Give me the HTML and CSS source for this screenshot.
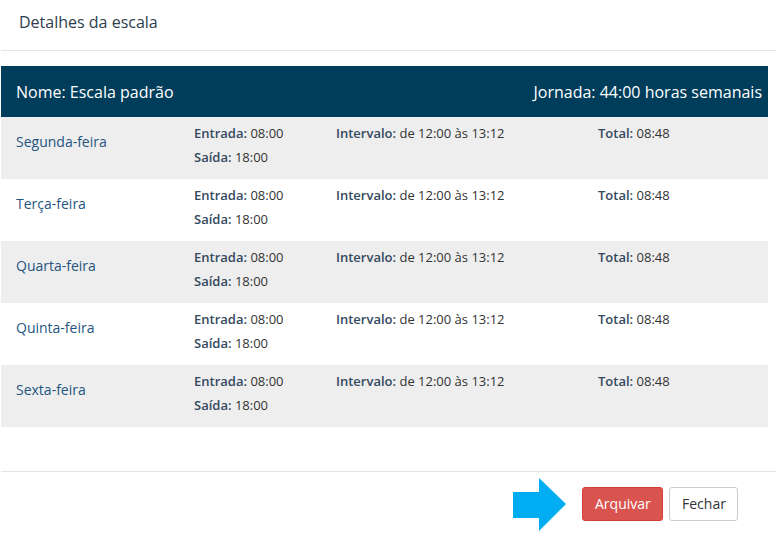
FILE: index.html
```html
<!DOCTYPE html>
<html lang="pt">
<head>
<meta charset="utf-8">
<title>Detalhes da escala</title>
<link rel="stylesheet" href="styles.css">
</head>
<body>
<div class="modal">
  <div class="modal-header">
    <h4 class="modal-title">Detalhes da escala</h4>
  </div>
  <div class="modal-body">
    <div class="scale-head">
      <span>Nome: Escala padrão</span>
      <span>Jornada: 44:00 horas semanais</span>
    </div>
    <div class="row odd">
      <div class="day">Segunda-feira</div>
      <div class="col"><div><b>Entrada:</b> 08:00</div><div><b>Saída:</b> 18:00</div></div>
      <div class="col"><b>Intervalo:</b> de 12:00 às 13:12</div>
      <div class="col"><b>Total:</b> 08:48</div>
    </div>
    <div class="row">
      <div class="day">Terça-feira</div>
      <div class="col"><div><b>Entrada:</b> 08:00</div><div><b>Saída:</b> 18:00</div></div>
      <div class="col"><b>Intervalo:</b> de 12:00 às 13:12</div>
      <div class="col"><b>Total:</b> 08:48</div>
    </div>
    <div class="row odd">
      <div class="day">Quarta-feira</div>
      <div class="col"><div><b>Entrada:</b> 08:00</div><div><b>Saída:</b> 18:00</div></div>
      <div class="col"><b>Intervalo:</b> de 12:00 às 13:12</div>
      <div class="col"><b>Total:</b> 08:48</div>
    </div>
    <div class="row">
      <div class="day">Quinta-feira</div>
      <div class="col"><div><b>Entrada:</b> 08:00</div><div><b>Saída:</b> 18:00</div></div>
      <div class="col"><b>Intervalo:</b> de 12:00 às 13:12</div>
      <div class="col"><b>Total:</b> 08:48</div>
    </div>
    <div class="row odd">
      <div class="day">Sexta-feira</div>
      <div class="col"><div><b>Entrada:</b> 08:00</div><div><b>Saída:</b> 18:00</div></div>
      <div class="col"><b>Intervalo:</b> de 12:00 às 13:12</div>
      <div class="col"><b>Total:</b> 08:48</div>
    </div>
  </div>
  <div class="modal-footer">
    <svg class="arrow" width="54" height="54" viewBox="0 0 54 54" aria-hidden="true">
      <polygon points="0,14 26,14 26,0 53,26 26,53 26,40 0,40" fill="#00adf2"/>
    </svg>
    <button class="btn btn-danger">Arquivar</button>
    <button class="btn btn-default">Fechar</button>
  </div>
</div>
</body>
</html>
```

FILE: styles.css
```css
* { box-sizing: border-box; }
html, body { margin: 0; padding: 0; background: #fff; }
body {
  font-family: "Open Sans", "Noto Sans", sans-serif;
  color: #333;
  width: 776px;
  height: 534px;
  overflow: hidden;
}
.modal { padding-left: 1px; }
.modal-header {
  height: 51px;
  border-bottom: 1px solid #e5e5e5;
  padding: 10px 0 0 18px;
}
.modal-title {
  margin: 0;
  font-size: 16px;
  font-weight: 400;
  line-height: 24px;
  color: #2e3d4c;
}
.modal-body {
  width: 767px;
  padding: 15px 0 44px 0;
}
.scale-head {
  height: 51px;
  background: #003d5b;
  color: #fff;
  font-size: 16px;
  display: flex;
  justify-content: space-between;
  align-items: center;
  padding: 0 6px 0 15px;
}
.row {
  height: 62px;
  display: grid;
  grid-template-columns: 178px 142px 262px 1fr;
  padding: 4px 0 0 15px;
  font-size: 13px;
  line-height: 24px;
  color: #333;
}
.row.odd { background: #eeeeee; }
.row b { font-weight: 600; color: #34495e; }
.day {
  font-size: 14px;
  line-height: 20px;
  padding-top: 11px;
  color: #24557f;
}
.modal-footer {
  border-top: 1px solid #e5e5e5;
  display: flex;
  align-items: center;
  padding: 1px 0 0 512px;
  height: 63px;
}
.arrow { display: block; margin-right: 15px; margin-top: 3px; }
.btn {
  font-family: inherit;
  font-size: 14px;
  height: 34px;
  line-height: 20px;
  padding: 6px 12px;
  border-radius: 3px;
  border: 1px solid;
  cursor: pointer;
}
.btn-danger {
  background: #d9534f;
  border-color: #d43f3a;
  color: #fff;
  width: 81px;
  margin-right: 6px;
}
.btn-default {
  background: #fff;
  border-color: #ccc;
  color: #333;
  width: 69px;
}
```
